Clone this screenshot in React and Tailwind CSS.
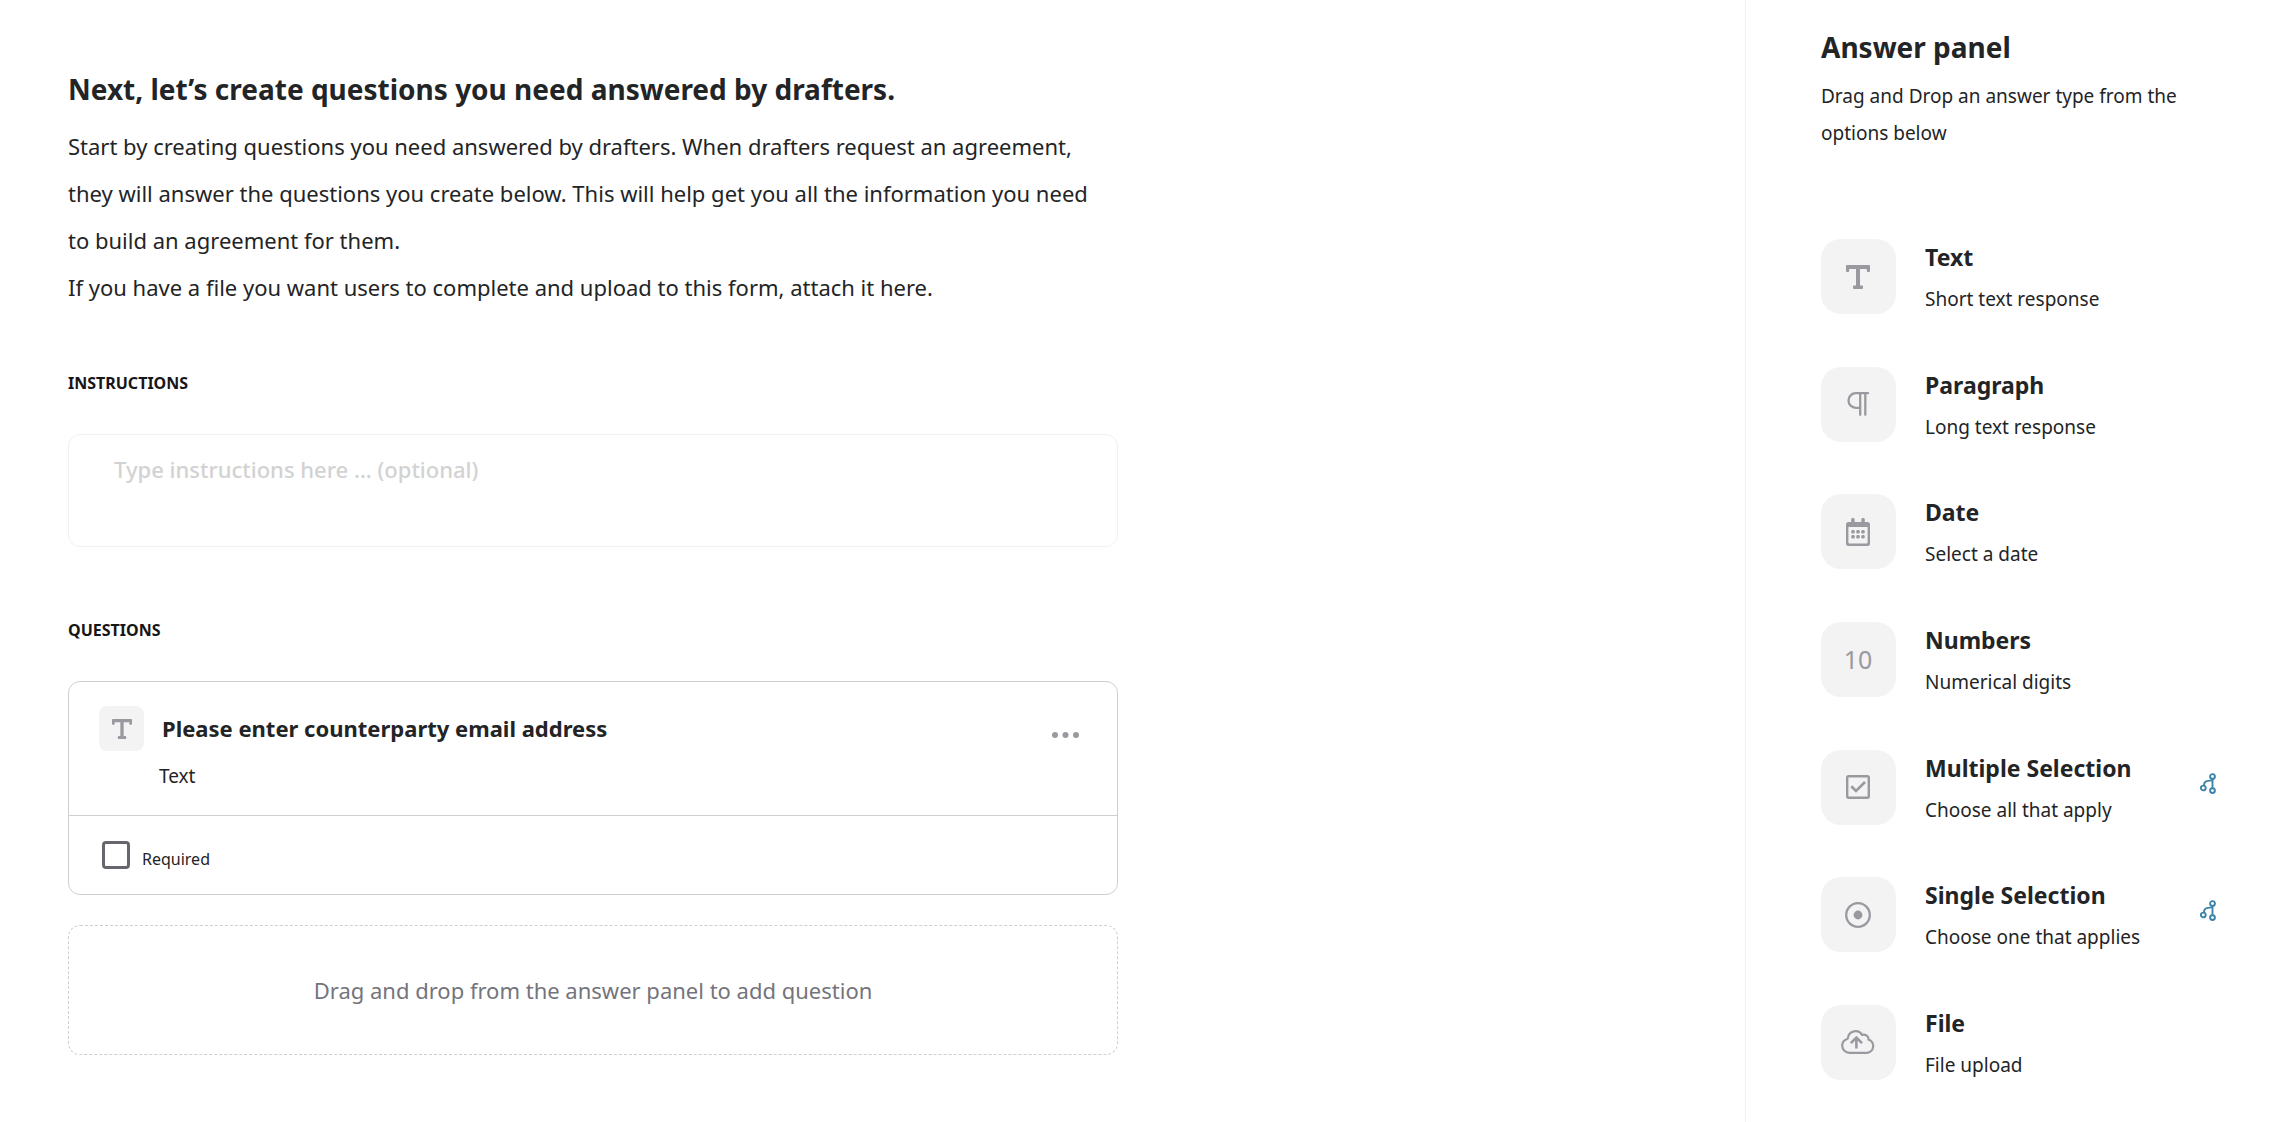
import { useState } from 'react';

function TextIcon({ className }) {
  return (
    <svg viewBox="0 0 24 24" className={className} fill="currentColor">
      <path d="M1 0h22a1 1 0 0 1 1 1v5a1 1 0 0 1-1 1h-1.200a1 1 0 0 1-1-1V4H14v16.500h2a1 1 0 0 1 1 1V23a1 1 0 0 1-1 1H8a1 1 0 0 1-1-1v-1.500a1 1 0 0 1 1-1h2V4H3.200v2a1 1 0 0 1-1 1H1a1 1 0 0 1-1-1V1a1 1 0 0 1 1-1z" />
    </svg>
  );
}

function ParagraphIcon() {
  return (
    <svg viewBox="0 0 24 24" className="size-6" fill="none" stroke="currentColor" strokeWidth="2.300" strokeLinecap="round">
      <path d="M22 1.200H9.800a7.300 7.300 0 0 0 0 14.600H14" />
      <path d="M14.200 1.500V22.800M19.300 1.500V22.800" />
    </svg>
  );
}

function CalendarIcon() {
  return (
    <svg viewBox="0 0 24 28" className="h-7 w-6" fill="currentColor">
      <rect x="5.200" y="0" width="3.400" height="6" rx="1.400" />
      <rect x="15.400" y="0" width="3.400" height="6" rx="1.400" />
      <path
        fillRule="evenodd"
        d="M2.500 4h19A2.500 2.500 0 0 1 24 6.500v19a2.500 2.500 0 0 1-2.500 2.500h-19A2.500 2.500 0 0 1 0 25.500v-19A2.500 2.500 0 0 1 2.500 4zM2.400 9v15.600a1 1 0 0 0 1 1h17.200a1 1 0 0 0 1-1V9z"
      />
      {[13.800, 18.800].map((cy) =>
        [7, 12, 17].map((cx) => (
          <rect key={`${cx}-${cy}`} x={cx - 1.700} y={cy - 1.700} width="3.400" height="3.400" rx="1.200" />
        ))
      )}
    </svg>
  );
}

function CheckIcon() {
  return (
    <svg viewBox="0 0 24 24" className="size-6" fill="none" stroke="currentColor" strokeWidth="2.400">
      <rect x="1.200" y="1.200" width="21.600" height="21.600" rx="1.500" />
      <path d="M5.300 11.200l4.700 4.700L19 7" strokeWidth="2.700" />
    </svg>
  );
}

function RadioIcon() {
  return (
    <svg viewBox="0 0 26 26" className="size-[26px]" fill="none" stroke="currentColor" strokeWidth="2.300">
      <circle cx="13" cy="13" r="11.800" />
      <circle cx="13" cy="13" r="4.400" fill="currentColor" stroke="none" />
    </svg>
  );
}

function CloudIcon() {
  return (
    <svg
      viewBox="0 0 34 24"
      className="h-6 w-[34px]"
      fill="none"
      stroke="currentColor"
      strokeWidth="2.200"
      strokeLinejoin="round"
    >
      <path d="M8.600 22.800H26a6.800 6.800 0 0 0 1.600-13.200c.2-3.500-3-5.700-6.600-4.700C17.500-.9 7.800.2 6.700 8.700 3.300 9.700 1.200 12.400 1.200 15.600c0 4 3.300 7.200 7.400 7.200z" />
      <path d="M15.400 18.600V8M9.800 13.200l5.600-5.600 5.600 5.600" strokeWidth="2.600" strokeLinejoin="miter" />
    </svg>
  );
}

function BranchIcon() {
  return (
    <svg viewBox="0 0 16 21" className="mt-[23px] h-[21px] w-4 text-[#3b83a8]" fill="none" stroke="currentColor" strokeWidth="1.900">
      <circle cx="12.500" cy="3.500" r="2.400" />
      <circle cx="12.500" cy="17.600" r="2.400" />
      <circle cx="3.300" cy="15" r="2.400" />
      <path d="M12.500 6v9M4 12.500c0-3 1-4.500 4-4.600 2.500-.1 4-.2 4.500-1.600" />
    </svg>
  );
}

const answerTypes = [
  { title: 'Text', description: 'Short text response', icon: <TextIcon className="size-6" /> },
  { title: 'Paragraph', description: 'Long text response', icon: <ParagraphIcon /> },
  { title: 'Date', description: 'Select a date', icon: <CalendarIcon /> },
  { title: 'Numbers', description: 'Numerical digits', icon: <span className="text-[25px] leading-8">10</span> },
  { title: 'Multiple Selection', description: 'Choose all that apply', icon: <CheckIcon />, branching: true },
  { title: 'Single Selection', description: 'Choose one that applies', icon: <RadioIcon />, branching: true },
  { title: 'File', description: 'File upload', icon: <CloudIcon /> },
];

function AnswerType({ title, description, icon, branching }) {
  return (
    <li draggable="true" className="flex cursor-grab items-start">
      <div className="flex size-[75px] shrink-0 items-center justify-center rounded-[20px] bg-[#f3f3f3] pr-px text-[#9a99a0]">
        {icon}
      </div>
      <div className="ml-[29px] flex-1 pt-[3px]">
        <h3 className="text-[23px] leading-[30px] font-bold">{title}</h3>
        <p className="mt-3.5 text-[19px] leading-[26px]">{description}</p>
      </div>
      {branching && <BranchIcon />}
    </li>
  );
}

function QuestionCard({ title, type }) {
  const [required, setRequired] = useState(false);

  return (
    <div className="mt-[39px] rounded-xl border border-[#cfcfcf]">
      <div className="border-b border-[#cfcfcf] px-[30px] pt-6 pb-[25px]">
        <div className="flex items-center">
          <div className="flex size-[45px] shrink-0 items-center justify-center rounded-lg bg-[#f3f3f3] text-[#9a99a0]">
            <TextIcon className="size-5" />
          </div>
          <h3 className="ml-[18px] flex-1 text-[22px] leading-[45px] font-bold">{title}</h3>
          <button type="button" aria-label="Question options" className="px-2 pt-3 text-[#9a99a0]">
            <svg viewBox="0 0 27 6" className="h-1.5 w-[27px]" fill="currentColor">
              <circle cx="3" cy="3" r="3" />
              <circle cx="13.500" cy="3" r="3" />
              <circle cx="24" cy="3" r="3" />
            </svg>
          </button>
        </div>
        <p className="mt-[11px] ml-15 text-[19px] leading-7">{type}</p>
      </div>
      <div className="flex items-end gap-3 px-[33px] py-[25px]">
        <input
          id="required"
          type="checkbox"
          checked={required}
          onChange={(e) => setRequired(e.target.checked)}
          className="size-7 appearance-none rounded border-3 border-[#66666e] checked:bg-[#66666e]"
        />
        <label htmlFor="required" className="text-base leading-5">
          Required
        </label>
      </div>
    </div>
  );
}

export default function App() {
  const [instructions, setInstructions] = useState('');

  return (
    <div className="flex min-h-screen bg-white font-['Noto_Sans',sans-serif] text-[#232426]">
      <main className="flex-1 px-[68px] pt-[69px]">
        <div className="max-w-[1050px]">
          <h1 className="text-[28px] leading-10 font-bold">
            Next, let’s create questions you need answered by drafters.
          </h1>
          <p className="mt-3.5 pr-4 text-[22px] leading-[47px]">
            Start by creating questions you need answered by drafters. When drafters request an agreement, they will
            answer the questions you create below. This will help get you all the information you need to build an
            agreement for them.
            <br />
            If you have a file you want users to complete and upload to this form, attach it here.
          </p>

          <label htmlFor="instructions" className="mt-15 block text-base leading-6 font-bold text-[#161618]">
            INSTRUCTIONS
          </label>
          <textarea
            id="instructions"
            value={instructions}
            onChange={(e) => setInstructions(e.target.value)}
            placeholder="Type instructions here … (optional)"
            className="mt-[39px] block h-[113px] w-full resize-none rounded-xl border border-[#f1f1f1] px-[45px] py-[18px] text-[22px] leading-8 font-medium placeholder:text-[#d2d2d2]"
          />

          <h2 className="mt-[71px] text-base leading-6 font-bold text-[#161618]">QUESTIONS</h2>
          <QuestionCard title="Please enter counterparty email address" type="Text" />

          <div className="mt-[30px] flex h-[130px] items-center justify-center rounded-xl border border-dashed border-[#cfcfcf] text-[22px] text-[#74747c]">
            Drag and drop from the answer panel to add question
          </div>
        </div>
      </main>

      <aside className="flex w-[545px] shrink-0 flex-col border-l border-[#f1f1f1] pt-[27px] pr-[74px] pb-[42px] pl-[75px]">
        <h2 className="text-[28px] leading-10 font-bold">Answer panel</h2>
        <p className="mt-[11px] text-[19px] leading-[37px]">Drag and Drop an answer type from the options below</p>
        <ul className="mt-[87px] flex flex-1 flex-col justify-between">
          {answerTypes.map((answer) => (
            <AnswerType key={answer.title} {...answer} />
          ))}
        </ul>
      </aside>
    </div>
  );
}
